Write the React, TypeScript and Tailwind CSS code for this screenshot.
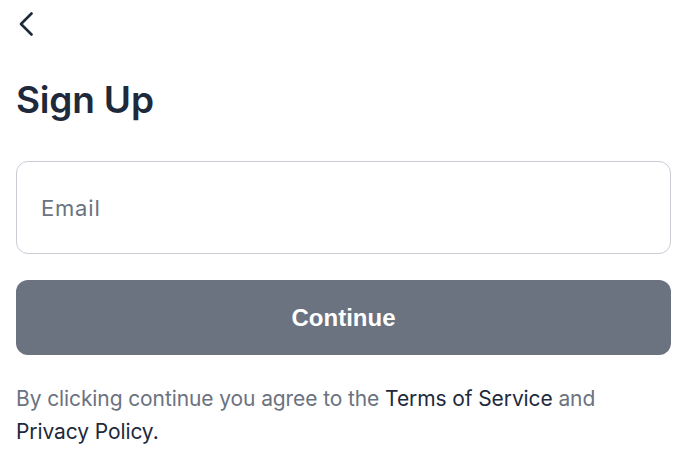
import React from 'react';

function BackArrow() {
  return (
    <svg width="16" height="24" viewBox="0 0 16 24" fill="none" className="text-[#1e293b]">
      <polyline points="13.5,1.5 3,12 13.5,22.5" stroke="currentColor" strokeWidth="2.6" strokeLinecap="round" strokeLinejoin="round" />
    </svg>
  );
}

export default function App() {
  return (
    <div className="w-[682px] h-[456px] bg-white overflow-hidden" style={{ fontFamily: 'Inter, "Noto Sans", sans-serif' }}>
      <div className="pl-4 pr-[11px]">
        <button className="block ml-[2px] mt-[12px]">
          <BackArrow />
        </button>
        <h1 className="mt-[40px] text-[37px] leading-[48px] font-semibold text-[#1e293b] tracking-[-0.2px]">Sign Up</h1>
        <div className="mt-[37px]">
          <input
            type="email"
            placeholder="Email"
            className="w-full h-[93px] rounded-[12px] border border-[#c9ccd4] px-6 text-[22px] tracking-[0.8px] text-[#1e293b] placeholder:text-[#6b7280] outline-none"
          />
        </div>
        <button
          className="mt-[26px] w-full h-[75px] rounded-[12px] bg-[#6b7280] text-white text-[24px] font-bold"
          style={{ fontFamily: '"Liberation Sans", Arial, sans-serif' }}
        >
          Continue
        </button>
        <p className="mt-[27px] text-[21px] leading-[33px] tracking-[-0.1px] text-[#6b7280]">
          By clicking continue you agree to the <span className="text-[#1e293b]">Terms of Service</span> and{' '}
          <span className="text-[#1e293b]">Privacy Policy.</span>
        </p>
      </div>
    </div>
  );
}
